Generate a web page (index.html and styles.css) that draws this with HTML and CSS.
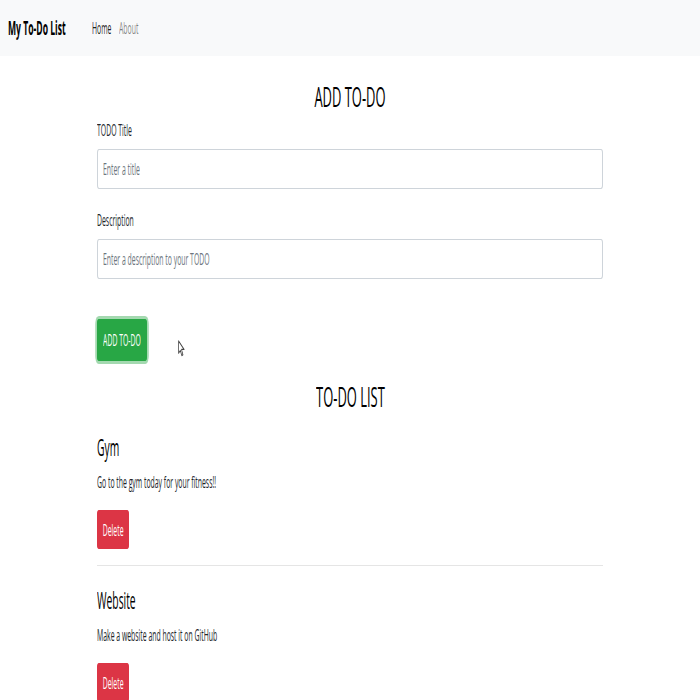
FILE: index.html
```html
<!DOCTYPE html>
<html lang="en">
<head>
<meta charset="utf-8">
<title>My To-Do List</title>
<link rel="stylesheet" href="styles.css">
</head>
<body>
  <nav class="navbar">
    <a class="brand" href="#"><span class="sx">My To-Do List</span></a>
    <ul class="nav">
      <li class="nav-item"><a class="nav-link active" href="#"><span class="sx">Home</span></a></li>
      <li class="nav-item"><a class="nav-link" href="#"><span class="sx">About</span></a></li>
    </ul>
  </nav>
  <main class="container">
    <h3 class="section-title title-add"><span class="sx sx-c">ADD TO-DO</span></h3>
    <form class="todo-form">
      <div class="form-group">
        <label class="form-label" for="title"><span class="sx">TODO Title</span></label>
        <div class="field">
          <input class="form-control" id="title" type="text" aria-label="Enter a title">
          <span class="placeholder"><span class="sx">Enter a title</span></span>
        </div>
      </div>
      <div class="form-group">
        <label class="form-label" for="desc"><span class="sx">Description</span></label>
        <div class="field">
          <input class="form-control" id="desc" type="text" aria-label="Enter a description to your TODO">
          <span class="placeholder"><span class="sx">Enter a description to your TODO</span></span>
        </div>
      </div>
      <div class="form-actions">
        <button class="btn btn-add" type="button"><span class="sx sx-c">ADD TO-DO</span></button>
        <svg class="cursor" viewBox="0 0 12 18" preserveAspectRatio="none" aria-hidden="true">
          <path d="M1 1 L1 14 L4 11 L6.5 16.5 L8.5 15.5 L6 10 L10.5 10 Z" fill="#fff" stroke="#444" stroke-width="1.3" stroke-linejoin="round"/>
        </svg>
      </div>
    </form>
    <h3 class="section-title title-list"><span class="sx sx-c">TO-DO LIST</span></h3>
    <div class="todo">
      <h4 class="todo-title"><span class="sx">Gym</span></h4>
      <p class="todo-desc"><span class="sx">Go to the gym today for your fitness!!</span></p>
      <button class="btn btn-del" type="button"><span class="sx sx-c">Delete</span></button>
    </div>
    <hr class="divider">
    <div class="todo">
      <h4 class="todo-title"><span class="sx">Website</span></h4>
      <p class="todo-desc"><span class="sx">Make a website and host it on GitHub</span></p>
      <button class="btn btn-del" type="button"><span class="sx sx-c">Delete</span></button>
    </div>
  </main>
</body>
</html>
```

FILE: styles.css
```css
html, body {
  margin: 0;
  padding: 0;
  background: #fff;
}

body {
  font-family: "Open Sans", "Noto Sans", sans-serif;
  font-size: 16px;
  line-height: 24px;
  color: #212529;
}

/* text is horizontally condensed, as in the reference */
.sx {
  display: inline-block;
  white-space: nowrap;
  transform: scaleX(0.43);
  transform-origin: 0 50%;
}

.sx-c {
  transform-origin: 50% 50%;
}

.navbar {
  height: 56px;
  background: #f8f9fa;
  display: flex;
  align-items: center;
  padding: 0 0 0 8px;
}

.brand {
  display: block;
  width: 84px;
  font-size: 20px;
  font-weight: 700;
  line-height: 30px;
  color: #000;
  text-decoration: none;
}

.nav {
  list-style: none;
  display: flex;
  margin: 0;
  padding: 0;
}

.nav-item {
  width: 27px;
}

.nav-link {
  display: block;
  color: rgba(0, 0, 0, 0.5);
  text-decoration: none;
  line-height: 24px;
}

.nav-link.active {
  color: rgba(0, 0, 0, 0.9);
}

.container {
  width: 506px;
  margin: 0 auto;
}

.section-title {
  margin: 0;
  font-size: 28px;
  font-weight: 400;
  line-height: 34px;
  text-align: center;
  color: #000;
}

.section-title .sx {
  transform: scaleX(0.462);
}

.title-add {
  padding-top: 23px;
}

.todo-form {
  margin-top: 5px;
}

.form-group {
  margin-bottom: 19px;
}

.form-label {
  display: block;
  line-height: 24px;
  margin-bottom: 7px;
}

.field {
  position: relative;
}

.form-control {
  display: block;
  box-sizing: border-box;
  width: 100%;
  height: 40px;
  margin: 0;
  padding: 0 6px;
  font-family: inherit;
  font-size: 16px;
  color: #495057;
  background: #fff;
  border: 1px solid #ced4da;
  border-radius: 2px / 4px;
}

.placeholder {
  position: absolute;
  left: 6px;
  top: 0;
  line-height: 40px;
  color: #6c757d;
  pointer-events: none;
}

.form-actions {
  position: relative;
  padding-top: 21px;
}

.btn {
  display: inline-flex;
  justify-content: center;
  align-items: center;
  box-sizing: border-box;
  border: 1px solid transparent;
  border-radius: 2px / 4px;
  padding: 0;
  margin: 0;
  font-family: inherit;
  font-size: 16px;
  line-height: 24px;
  color: #fff;
  cursor: pointer;
}

.btn-add {
  width: 50px;
  height: 42px;
  background: #28a745;
  border-color: #28a745;
  box-shadow: 0 0 0 1.4px #a4d9b0, 0 1.6px 0 1.4px #a4d9b0, 0 -1.6px 0 1.4px #a4d9b0;
}

.cursor {
  position: absolute;
  left: 81px;
  top: 42px;
  width: 7px;
  height: 17px;
}

.title-list {
  margin-top: 18px;
}

.todo-title {
  margin: 19px 0 0;
  font-size: 24px;
  font-weight: 400;
  line-height: 29px;
  color: #000;
}

.todo-desc {
  margin: 9px 0 0;
  line-height: 24px;
}

.btn-del {
  margin-top: 16px;
  width: 32px;
  height: 39px;
  background: #dc3545;
  border-color: #dc3545;
}

.divider {
  margin: 16px 0 0;
  border: 0;
  border-top: 1px solid rgba(0, 0, 0, 0.1);
}
```
